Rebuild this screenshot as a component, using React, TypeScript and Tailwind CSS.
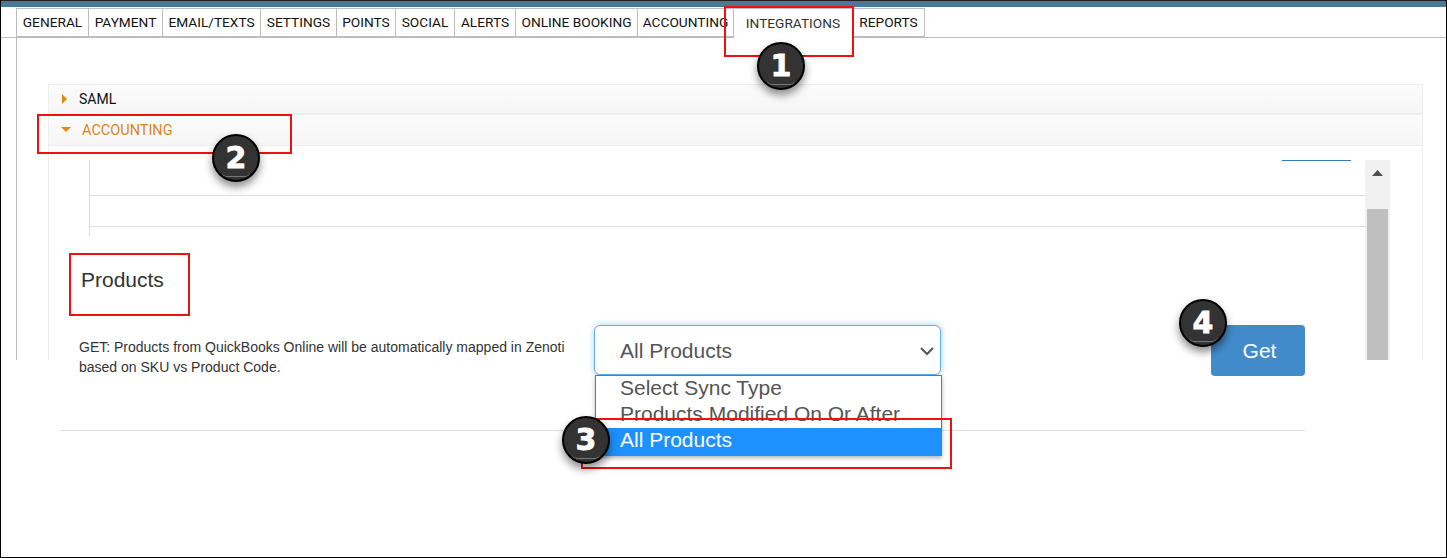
const tabs = [
  { label: "GENERAL", w: "w-[72px]" },
  { label: "PAYMENT", w: "w-[74px]" },
  { label: "EMAIL/TEXTS", w: "w-[98px]" },
  { label: "SETTINGS", w: "w-[76px]" },
  { label: "POINTS", w: "w-[59px]" },
  { label: "SOCIAL", w: "w-[59px]" },
  { label: "ALERTS", w: "w-[61px]" },
  { label: "ONLINE BOOKING", w: "w-[122px]" },
  { label: "ACCOUNTING", w: "w-[96px]" },
];

function Badge({ n, className }: { n: number; className: string }) {
  return (
    <div
      className={`absolute flex h-[48px] w-[48px] items-center justify-center rounded-full border-2 border-black bg-[#333333] pb-[1px] font-['DejaVu_Sans',sans-serif] text-[30px] font-bold text-white shadow-[0_5px_8px_rgba(0,0,0,0.45)] [-webkit-text-stroke:0.8px_white] ${className}`}
    >
      {n}
      <div className="absolute bottom-[3px] left-[8px] h-[5px] w-[28px] rounded-b-full border-b border-[#777777]" />
    </div>
  );
}

// red call-out frame drawn over the screenshot
function Frame({ className }: { className: string }) {
  return <div className={`absolute border-2 border-[#ee1111] ${className}`} />;
}

export default function App() {
  return (
    <div className="relative h-[558px] w-[1447px] overflow-hidden border-x border-b border-black bg-white font-['Liberation_Sans',sans-serif]">
      {/* Top bar */}
      <div className="h-[7px] border-t border-[#222222] bg-[#4a7896]" />

      {/* Tabs */}
      <div className="flex h-[31px] border-b border-[#bdbdbd] pl-[15px] pt-[1px] font-['Roboto',sans-serif] text-[13.7px] text-[#111111]">
        {tabs.map((t) => (
          <div
            key={t.label}
            className={`flex h-[29px] items-center justify-center border-y border-l border-[#bdbdbd] ${t.w}`}
          >
            {t.label}
          </div>
        ))}
        <div className="flex h-[30px] w-[120px] items-center justify-center border-x border-t border-[#bdbdbd] bg-white text-[#333333]">
          INTEGRATIONS
        </div>
        <div className="flex h-[29px] w-[72px] items-center justify-center border-y border-r border-[#bdbdbd]">
          REPORTS
        </div>
      </div>

      {/* Panel */}
      <div className="h-[322px] pl-[15px]">
        <div className="h-full border-l border-[#bdbdbd] pl-[31px] pr-[23px] pt-[46px]">
          <div className="h-full border-x border-[#eeeeee]">
            <div className="flex h-[30px] items-center border-y border-[#eeeeee] bg-linear-to-b from-[#fbfbfb] to-[#f6f6f6] pl-[13px] font-['Roboto',sans-serif] text-[14px] text-[#111111]">
              <svg width="6" height="10" viewBox="0 0 6 10" className="mr-[11px]">
                <path d="M0 0l5 5-5 5z" fill="#e8870e" />
              </svg>
              SAML
            </div>
            <div className="flex h-[32px] items-center border-y border-[#eeeeee] bg-linear-to-b from-[#fbfbfb] to-[#f6f6f6] pl-[12px] font-['Roboto',sans-serif] text-[14.500px] text-[#d9861f]">
              <svg width="10" height="6" viewBox="0 0 10 6" className="mr-[11px]">
                <path d="M0 0h10L5 5z" fill="#e8870e" />
              </svg>
              <span className="pt-[2px]">ACCOUNTING</span>
            </div>

            <div className="flex pt-[14px]">
              <div className="w-[1316px]">
                {/* Table stub */}
                <div className="ml-[40px] h-[76px] border-l border-[#dddddd]">
                  <div className="ml-auto mr-[14px] h-[1px] w-[69px] bg-[#337ab7]" />
                  <div className="mt-[34px] h-[1px] bg-[#dddddd]" />
                  <div className="mt-[30px] h-[1px] bg-[#dddddd]" />
                </div>

                <div className="mt-[32px] pl-[32px] text-[21px] leading-[24px] text-[#333333]">Products</div>

                {/* Sync row */}
                <div className="mt-[33px] flex pl-[30px] pr-[60px]">
                  <div className="w-[515px] pt-[12px] text-[14px] leading-[20px] text-[#333333]">
                    <div>GET: Products from QuickBooks Online will be automatically mapped in Zenoti</div>
                    <div>based on SKU vs Product Code.</div>
                  </div>
                  <div className="relative h-[50px] w-[347px]">
                    <div className="flex h-full items-center justify-between rounded-[6px] border border-[#66afe9] bg-white pl-[25px] pr-[5px] pt-[1px] text-[21px] text-[#555555] shadow-[0_0_6px_rgba(102,175,233,0.6)]">
                      All Products
                      <svg width="16" height="10" viewBox="0 0 16 10">
                        <path d="M2 2l6 6 6-6" fill="none" stroke="#555555" strokeWidth="2" />
                      </svg>
                    </div>
                    {/* Open select list */}
                    <div className="absolute left-[1px] top-[50px] h-[81px] w-[347px] border border-[#767676] bg-white text-[21px] leading-[26px] text-[#555555] shadow-[0_2px_4px_rgba(0,0,0,0.3)]">
                      <div className="-mt-[1px] pl-[24px]">Select Sync Type</div>
                      <div className="pl-[24px]">Products Modified On Or After</div>
                      <div className="mt-[1px] h-[28px] bg-[#1e90ff] pl-[24px] leading-[24px] text-white">All Products</div>
                    </div>
                  </div>
                  <div className="ml-auto flex h-[51px] w-[94px] items-center justify-center rounded-[4px] bg-[#428bca] pl-[3px] text-[21px] text-white">
                    Get
                  </div>
                </div>

                <div className="ml-[11px] mr-[60px] mt-[53px] h-[1px] bg-[#dddddd]" />
              </div>

              {/* Scrollbar, cut off with the panel */}
              <div className="h-[200px] w-[25px] bg-[#f1f1f1]">
                <svg width="25" height="49" viewBox="0 0 25 49" className="block">
                  <path d="M7 16L12.500 10 18 16z" fill="#505050" />
                </svg>
                <div className="mx-[2px] h-[151px] bg-[#bfbfbf]" />
              </div>
            </div>
          </div>
        </div>
      </div>

      {/* Annotations */}
      <Frame className="left-[723px] top-[6px] h-[51px] w-[130px]" />
      <Frame className="left-[36px] top-[114px] h-[40px] w-[255px]" />
      <Frame className="left-[68px] top-[253px] h-[63px] w-[121px]" />
      <Frame className="left-[580px] top-[418px] h-[51px] w-[371px]" />
      <Badge n={1} className="left-[756px] top-[42px]" />
      <Badge n={2} className="left-[211px] top-[134px]" />
      <Badge n={3} className="left-[561px] top-[416px]" />
      <Badge n={4} className="left-[1178px] top-[299px]" />
    </div>
  );
}
